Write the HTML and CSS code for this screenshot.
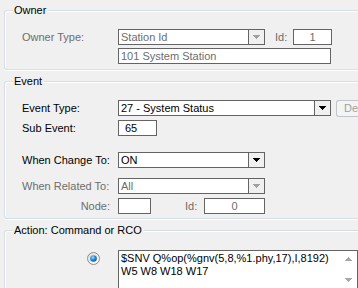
FILE: index.html
```html
<!DOCTYPE html>
<html>
<head>
<meta charset="utf-8">
<link rel="stylesheet" href="styles.css">
</head>
<body>
<div class="page">
  <div class="group g-owner">
    <div class="legend">Owner</div>
    <div class="row first">
      <span class="lbl dis">Owner Type:</span>
      <div class="combo dis w147"><span class="val">Station Id</span><span class="btn"><svg width="7" height="5" viewBox="0 0 7 5"><path d="M0 0h7v1h-1v1h-1v1h-1v1h-1v-1h-1v-1h-1v-1h-1z" fill="#a0a0a0"/></svg></span></div>
      <span class="idlbl dis">Id:</span>
      <div class="box dis w39 center">1</div>
    </div>
    <div class="row gap3">
      <span class="lbl"></span>
      <div class="box dis w213">101 System Station</div>
    </div>
  </div>

  <div class="group g-event">
    <div class="legend">Event</div>
    <div class="row first">
      <span class="lbl">Event Type:</span>
      <div class="combo w213"><span class="val">27 - System Status</span><span class="btn"><svg width="7" height="5" viewBox="0 0 7 5"><path d="M0 0h7v1h-1v1h-1v1h-1v1h-1v-1h-1v-1h-1v-1h-1z" fill="#000"/></svg></span></div>
      <div class="pushbtn">De</div>
    </div>
    <div class="row gap4">
      <span class="lbl">Sub Event:</span>
      <div class="box w39 sub">65</div>
    </div>
    <div class="row gap16">
      <span class="lbl">When Change To:</span>
      <div class="combo w147"><span class="val">ON</span><span class="btn"><svg width="7" height="5" viewBox="0 0 7 5"><path d="M0 0h7v1h-1v1h-1v1h-1v1h-1v-1h-1v-1h-1v-1h-1z" fill="#000"/></svg></span></div>
    </div>
    <div class="row gap10">
      <span class="lbl dis">When Related To:</span>
      <div class="combo dis w147"><span class="val">All</span><span class="btn"><svg width="7" height="5" viewBox="0 0 7 5"><path d="M0 0h7v1h-1v1h-1v1h-1v1h-1v-1h-1v-1h-1v-1h-1z" fill="#a0a0a0"/></svg></span></div>
    </div>
    <div class="row gap4">
      <span class="lbl dis right">Node:</span>
      <div class="box w33"></div>
      <span class="idlbl2 dis">Id:</span>
      <div class="box dis w61 center">0</div>
    </div>
  </div>

  <div class="group g-action">
    <div class="legend">Action: Command or RCO</div>
    <div class="row first act">
      <span class="lbl radio-cell">
        <svg class="radio" width="13" height="13" viewBox="0 0 13 13">
          <defs>
            <linearGradient id="rb" x1="0" y1="0" x2="1" y2="1">
              <stop offset="0" stop-color="#dcdcdc"/>
              <stop offset="1" stop-color="#ffffff"/>
            </linearGradient>
            <radialGradient id="dot" cx="0.4" cy="0.35" r="0.7">
              <stop offset="0" stop-color="#9fe1ff"/>
              <stop offset="0.5" stop-color="#2a8fd6"/>
              <stop offset="1" stop-color="#0b4e8c"/>
            </radialGradient>
          </defs>
          <circle cx="6.5" cy="6.5" r="6" fill="url(#rb)" stroke="#8e8f8f"/>
          <circle cx="6.5" cy="6.5" r="3.3" fill="url(#dot)"/>
        </svg>
      </span>
      <div class="textarea">
        <div class="ta-text">$SNV Q%op(%gnv(5,8,%1.phy,17),I,8192)
W5 W8 W18 W17</div>
        <div class="scroll">
          <svg width="7" height="4" viewBox="0 0 7 4"><path d="M3 0h1v1h1v1h1v1h1v1h-7v-1h1v-1h1v-1h1z" fill="#a8a8a8"/></svg>
          <svg width="7" height="4" viewBox="0 0 7 4"><path d="M0 0h7v1h-1v1h-1v1h-1v1h-1v-1h-1v-1h-1v-1h-1z" fill="#a8a8a8"/></svg>
        </div>
      </div>
    </div>
  </div>
</div>
</body>
</html>
```
FILE: styles.css
```css
html, body {
  margin: 0;
  padding: 0;
  background: #f0f0f0;
  overflow: hidden;
}
body {
  font-family: "Liberation Sans", Arial, sans-serif;
  font-size: 11px;
  color: #000;
  width: 358px;
  height: 288px;
}
.page {
  box-sizing: border-box;
  padding-top: 10px;
  padding-left: 4px;
  width: 358px;
  height: 288px;
  overflow: hidden;
}
.group {
  box-sizing: border-box;
  border: 1px solid #d5dfe5;
  border-right: none;
  border-radius: 3px 0 0 3px;
  box-shadow: inset 1px 1px 0 #fff, 0 1px 0 #fff;
  width: 354px;
}
.g-owner { height: 60px; }
.g-event { margin-top: 11px; height: 138px; }
.g-action {
  margin-top: 11px;
  height: 58px;
  border-bottom: none;
  border-radius: 3px 0 0 0;
  box-shadow: inset 1px 1px 0 #fff;
}
.legend {
  display: inline-block;
  margin-top: -7px;
  margin-left: 8px;
  padding: 0 2px 0 1px;
  line-height: 13px;
  height: 13px;
  background: #f0f0f0;
  vertical-align: top;
}
.row {
  display: flex;
  align-items: center;
  height: 16px;
  padding-left: 17px;
}
.row.first { margin-top: 6px; }
.row.gap3 { margin-top: 3px; }
.row.gap4 { margin-top: 4px; }
.row.gap10 { margin-top: 10px; }
.row.gap16 { margin-top: 16px; }
.lbl {
  width: 96px;
  flex: none;
  line-height: 14px;
  white-space: nowrap;
}
.lbl.right {
  text-align: right;
  padding-right: 8px;
  width: 88px;
}
.dis { color: #6d6d6d; }
.box, .combo {
  box-sizing: border-box;
  height: 16px;
  border: 1px solid #646464;
  background: #fff;
  line-height: 14px;
  padding-left: 2px;
  white-space: nowrap;
  overflow: hidden;
  flex: none;
}
.combo {
  display: flex;
  padding-left: 0;
}
.combo .val {
  flex: 1;
  padding-left: 2px;
}
.combo .btn {
  width: 16px;
  height: 14px;
  box-sizing: border-box;
  border-left: 1px solid #646464;
  background: #f0f0f0;
  display: flex;
  align-items: center;
  justify-content: center;
}
.combo .btn svg { display: block; margin-top: 1px; }
.w147 { width: 147px; }
.w213 { width: 213px; }
.w39 { width: 39px; }
.w33 { width: 33px; }
.w61 { width: 61px; }
.center { text-align: center; padding-left: 0; }
.sub { padding-left: 6px; }
.idlbl {
  margin-left: 10px;
  width: 18px;
  flex: none;
}
.idlbl2 {
  margin-left: 34px;
  width: 19px;
  flex: none;
}
.pushbtn {
  box-sizing: border-box;
  margin-left: 5px;
  height: 17px;
  width: 23px;
  border: 1px solid #c3c6c8;
  border-right: none;
  border-radius: 3px 0 0 3px;
  background: #f4f4f4;
  color: #a0a0a0;
  line-height: 15px;
  padding-left: 7px;
  overflow: hidden;
  white-space: nowrap;
  flex: none;
}
.row.act {
  align-items: flex-start;
  height: auto;
  margin-top: 7px;
}
.radio-cell {
  padding-top: 2px;
  height: 13px;
}
.radio {
  display: block;
  margin-left: 65px;
}
.textarea {
  box-sizing: border-box;
  width: 240px;
  height: 41px;
  border: 1px solid #646464;
  background: #fff;
  display: flex;
  flex: none;
}
.ta-text {
  flex: 1;
  white-space: pre;
  line-height: 13px;
  padding-left: 2px;
  padding-top: 1px;
  overflow: hidden;
}
.scroll {
  width: 17px;
  flex: none;
  display: flex;
  flex-direction: column;
  justify-content: space-between;
  align-items: center;
  padding: 6px 0 8px;
  box-sizing: border-box;
  background: #fff;
}
.scroll svg { display: block; }
```
